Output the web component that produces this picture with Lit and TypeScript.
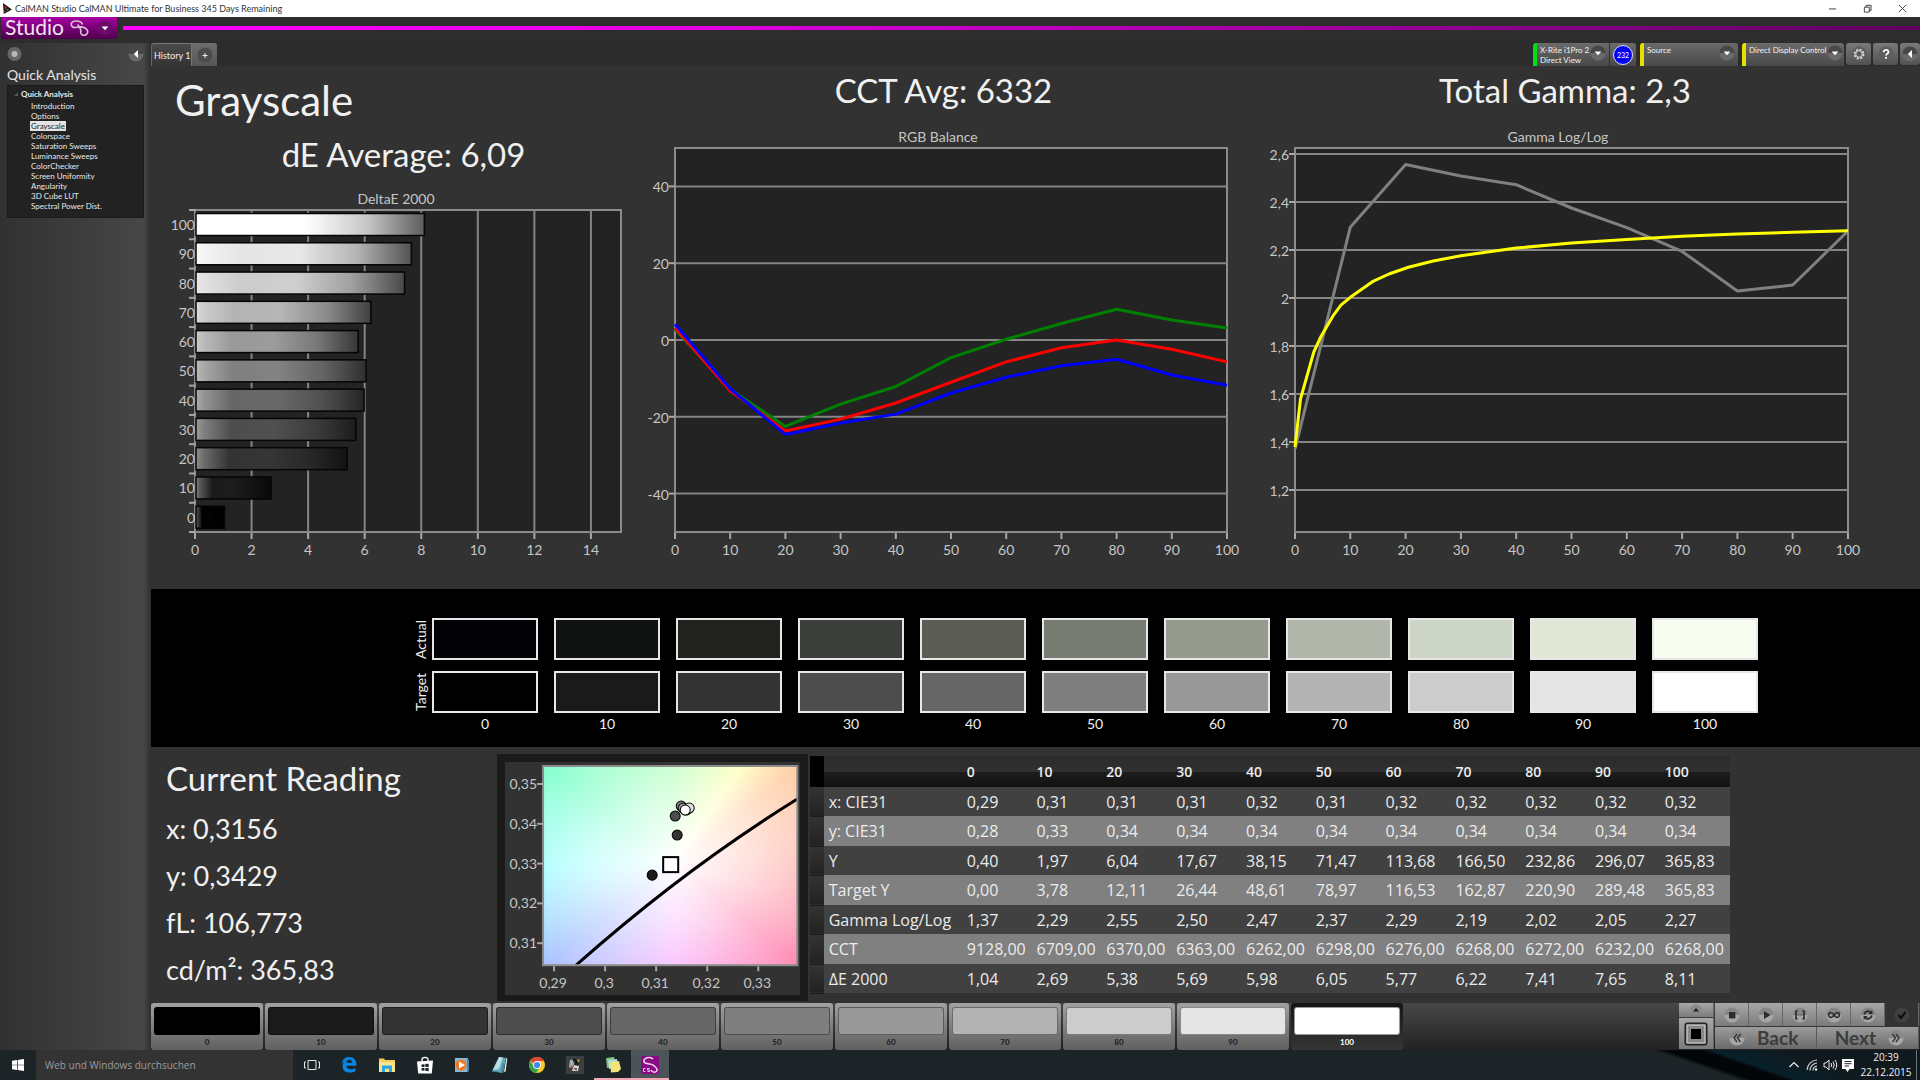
import { LitElement, html, svg, css, type TemplateResult } from "lit";
import { customElement, property } from "lit/decorators.js";
import { classMap } from "lit/directives/class-map.js";

type Point = [number, number];

const LEVELS = [0, 10, 20, 30, 40, 50, 60, 70, 80, 90, 100];
const ACTUAL = ["#020206", "#101311", "#22221f", "#3b3e3a", "#5b5d55", "#767c72", "#949b8d", "#b0b7aa", "#cdd5c6", "#e2e8d8", "#f6fdf0"];
const grey = (level: number, factor = 1, add = 0): string => {
  const v = Math.round(Math.min(255, level * 2.55 * factor + add));
  return `rgb(${v},${v},${v})`;
};
const comma = (v: number): string => String(v).replace(".", ",");

const DELTA_E = [1.04, 2.69, 5.38, 5.69, 5.98, 6.05, 5.77, 6.22, 7.41, 7.65, 8.11];

const RGB_SERIES: { color: string; values: number[] }[] = [
  { color: "#008000", values: [2.8, -12.8, -22.5, -16.7, -12.1, -4.6, 0.2, 4.3, 8, 5.2, 3.1] },
  { color: "#ff0000", values: [3.2, -13.2, -23.7, -20.6, -16.4, -11, -5.7, -2, 0, -2.4, -5.7] },
  { color: "#0000ff", values: [4.1, -12.7, -24.6, -21.6, -19.3, -13.8, -9.7, -6.7, -5, -9.1, -11.8] },
];
const GAMMA_MEASURED = [1.37, 2.295, 2.556, 2.508, 2.472, 2.375, 2.293, 2.194, 2.029, 2.054, 2.279];
const GAMMA_TARGET: Point[] = [
  [0, 1.379], [1, 1.58], [3.4, 1.775], [4.7, 1.84], [7, 1.93], [8.3, 1.97], [10, 2.003], [14, 2.068], [17, 2.1],
  [20.5, 2.128], [25, 2.154], [30, 2.176], [40, 2.208], [50, 2.229], [60, 2.244], [70, 2.257], [80, 2.267], [90, 2.274], [100, 2.28],
];

const TABLE: { label: string; values: string[] }[] = [
  { label: "x: CIE31", values: ["0,29", "0,31", "0,31", "0,31", "0,32", "0,31", "0,32", "0,32", "0,32", "0,32", "0,32"] },
  { label: "y: CIE31", values: ["0,28", "0,33", "0,34", "0,34", "0,34", "0,34", "0,34", "0,34", "0,34", "0,34", "0,34"] },
  { label: "Y", values: ["0,40", "1,97", "6,04", "17,67", "38,15", "71,47", "113,68", "166,50", "232,86", "296,07", "365,83"] },
  { label: "Target Y", values: ["0,00", "3,78", "12,11", "26,44", "48,61", "78,97", "116,53", "162,87", "220,90", "289,48", "365,83"] },
  { label: "Gamma Log/Log", values: ["1,37", "2,29", "2,55", "2,50", "2,47", "2,37", "2,29", "2,19", "2,02", "2,05", "2,27"] },
  { label: "CCT", values: ["9128,00", "6709,00", "6370,00", "6363,00", "6262,00", "6298,00", "6276,00", "6268,00", "6272,00", "6232,00", "6268,00"] },
  { label: "ΔE 2000", values: ["1,04", "2,69", "5,38", "5,69", "5,98", "6,05", "5,77", "6,22", "7,41", "7,65", "8,11"] },
];

const base = css`
  * { box-sizing: border-box; }
  button { font: inherit; color: inherit; border: 0; padding: 0; margin: 0; background: none; cursor: pointer; }
  a { color: inherit; text-decoration: none; }
  h1, h2, p { margin: 0; font-weight: 400; }
  svg { display: block; }
`;

const chartStyles = css`
  :host { display: block; }
  svg { width: 100%; height: auto; }
  .plot { fill: #232323; stroke: #8c8c8c; stroke-width: 2; }
  .grid { stroke: #858585; stroke-width: 2; }
  .tick { stroke: #a8a8a8; stroke-width: 2; }
  .label { fill: #c6c6c6; font-size: 14px; font-family: Lato, "Noto Sans", sans-serif; }
  .end { text-anchor: end; }
  .mid { text-anchor: middle; }
  .line { fill: none; stroke-width: 3; stroke-linejoin: round; }
`;

@customElement("delta-chart")
class DeltaChart extends LitElement {
  static styles = [base, chartStyles];
  render() {
    const row = 322 / 11;
    const x = (v: number) => 44 + v * 28.28;
    return html`<svg viewBox="0 0 480 403" role="img" aria-label="DeltaE 2000">
      <defs>
        ${LEVELS.map((l) => svg`<linearGradient id=${"bar" + l}>
          <stop offset="0" stop-color=${grey(l, 0.6, 110)}></stop>
          <stop offset=".05" stop-color=${grey(l, 0.75, 70)}></stop>
          <stop offset=".22" stop-color=${grey(l)}></stop>
          <stop offset=".48" stop-color=${grey(l, 1, 3)}></stop>
          <stop offset=".75" stop-color=${grey(l, 0.78)}></stop>
          <stop offset="1" stop-color=${grey(l, 0.36)}></stop>
        </linearGradient>`)}
      </defs>
      <text class="label mid" x="245" y="18">DeltaE 2000</text>
      <rect class="plot" x="44" y="24" width="426" height="322"></rect>
      ${[0, 2, 4, 6, 8, 10, 12, 14].map((v) => svg`
        ${v ? svg`<line class="grid" x1=${x(v)} x2=${x(v)} y1="24" y2="346"></line>` : ""}
        <line class="tick" x1=${x(v)} x2=${x(v)} y1="347" y2="353"></line>
        <text class="label mid" x=${x(v)} y="369">${v}</text>`)}
      ${LEVELS.map((_, i) => svg`<line class="tick" x1="38" x2="44" y1=${24 + i * row} y2=${24 + i * row}></line>`)}
      <line class="tick" x1="38" x2="44" y1="346" y2="346"></line>
      ${LEVELS.map((l, i) => {
        const top = 24 + (10 - i) * row;
        return svg`<rect x="45" y=${top + 3.5} width=${x(DELTA_E[i]) - 45} height="22" fill=${`url(#bar${l})`} stroke="#050505" stroke-width="1.5"></rect>
          <text class="label end" x="44" y=${top + 20}>${l}</text>`;
      })}
    </svg>`;
  }
}

@customElement("line-chart")
class LineChart extends LitElement {
  static styles = [base, chartStyles];
  @property() caption = "";
  @property({ type: Number }) width = 625;
  @property({ type: Number }) left = 44;
  @property({ type: Number }) right = 596;
  @property({ type: Number }) captionX = 307;
  @property({ type: Number }) min = 0;
  @property({ type: Number }) max = 1;
  @property({ attribute: false }) ticks: number[] = [];
  @property({ attribute: false }) series: { color: string; points: Point[] }[] = [];
  render() {
    const x = (v: number) => this.left + (v / 100) * (this.right - this.left);
    const y = (v: number) => 22 + ((this.max - v) / (this.max - this.min)) * 384;
    return html`<svg viewBox=${`0 0 ${this.width} 463`} role="img" aria-label=${this.caption}>
      <text class="label mid" x=${this.captionX} y="16">${this.caption}</text>
      <rect class="plot" x=${this.left} y="22" width=${this.right - this.left} height="384"></rect>
      ${this.ticks.map((t) => svg`
        <line class="grid" x1=${this.left} x2=${this.right} y1=${y(t)} y2=${y(t)}></line>
        <line class="tick" x1=${this.left - 6} x2=${this.left} y1=${y(t)} y2=${y(t)}></line>
        <text class="label end" x=${this.left - 6} y=${y(t) + 6}>${comma(t)}</text>`)}
      ${LEVELS.map((l) => svg`
        <line class="tick" x1=${x(l)} x2=${x(l)} y1="407" y2="413"></line>
        <text class="label mid" x=${x(l)} y="429">${l}</text>`)}
      ${this.series.map((s) => svg`<polyline class="line" stroke=${s.color} points=${s.points.map((p) => `${x(p[0])},${y(p[1])}`).join(" ")}></polyline>`)}
    </svg>`;
  }
}

@customElement("cie-chart")
class CieChart extends LitElement {
  static styles = [
    base,
    chartStyles,
    css`
      .gamut {
        width: 100%;
        height: 100%;
        background:
          radial-gradient(ellipse 100% 100% at 52% 48%, #fff 0, rgba(255, 255, 255, 0.62) 30%, rgba(255, 255, 255, 0) 72%),
          conic-gradient(from 0deg at 52% 48%, #b4ffb8 0deg, #ffffb4 35deg, #ffcba0 52deg, #ffb0a8 90deg, #ff88b2 129deg,
            #fab0ff 180deg, #aac4ff 232deg, #98ffff 268deg, #80ffcc 306deg, #b4ffb8 360deg);
      }
      .frame { fill: none; stroke: #8c8c8c; stroke-width: 2; }
      .locus { fill: none; stroke: #000; stroke-width: 3; }
      .dot { stroke: #000; stroke-width: 1; }
      .target { fill: #fff; stroke: #000; stroke-width: 2; }
    `,
  ];
  render() {
    const dots: [number, number, string][] = [
      [147, 113, "#1a1a1a"], [172, 73, "#333"], [170, 54, "#4d4d4d"], [176, 44, "#808080"], [178, 46, "#999"],
      [181, 48, "#b3b3b3"], [184, 46, "#e0e0e0"], [180, 48, "#fff"],
    ];
    return html`<svg viewBox="0 0 294 233" role="img" aria-label="CIE chromaticity">
      <foreignObject x="38" y="4" width="254" height="199"><div class="gamut"></div></foreignObject>
      <path class="locus" d="M71 203 Q179 107 292 37"></path>
      <rect class="frame" x="38" y="4" width="254" height="199"></rect>
      ${["0,35", "0,34", "0,33", "0,32", "0,31"].map((t, i) => svg`
        <line class="tick" x1="32" x2="38" y1=${22 + i * 39.75} y2=${22 + i * 39.75}></line>
        <text class="label end" x="32" y=${27 + i * 39.75}>${t}</text>`)}
      ${["0,29", "0,3", "0,31", "0,32", "0,33"].map((t, i) => svg`
        <line class="tick" x1=${49 + i * 51} x2=${49 + i * 51} y1="204" y2="209"></line>
        <text class="label mid" x=${48 + i * 51} y="226">${t}</text>`)}
      ${dots.map(([cx, cy, fill]) => svg`<circle class="dot" cx=${cx} cy=${cy} r="5" fill=${fill}></circle>`)}
      <rect class="target" x="158" y="95" width="15" height="15"></rect>
    </svg>`;
  }
}

const arrow = (dir: "down" | "left"): TemplateResult => html`<svg class="knob" viewBox="0 0 16 16" width="16" height="16" aria-hidden="true">
  <circle cx="8" cy="8" r="7.500" fill="#6a6a6a"></circle>
  <path d="M.5 8a7.500 7.500 0 0 1 15 0z" fill="#474747"></path>
  ${dir === "down" ? svg`<path d="M4.600 6.600h6.800L8 10.200z" fill="#fff"></path>` : svg`<path d="M10 4v8L5.800 8z" fill="#fff"></path>`}
</svg>`;

const CONTROL_ICONS: { name: string; icon: TemplateResult }[] = [
  { name: "Stop", icon: svg`<path d="M5 5h6.400v6.400H5z" fill="#2c2c2c"></path>` },
  { name: "Read", icon: svg`<path d="M6 4l6.500 4L6 12z" fill="#2c2c2c"></path>` },
  { name: "Read range", icon: svg`<path d="M4 3.500v9M12 3.500v9" stroke="#2c2c2c" stroke-width="1.700" fill="none"></path><path d="M4 4h1.800M4 12h1.800M12 4h-1.800M12 12h-1.800M6 8h1M7.700 8h1M9.400 8h1" stroke="#2c2c2c" stroke-width="1.200" fill="none"></path>` },
  { name: "Continuous", icon: svg`<path d="M8 8C6.800 6.200 6 5.600 5 5.600a2.400 2.400 0 0 0 0 4.800C6 10.400 6.800 9.800 8 8s2-2.400 3-2.400a2.400 2.400 0 0 1 0 4.800C10 10.400 9.200 9.800 8 8z" stroke="#2c2c2c" stroke-width="1.500" fill="none"></path>` },
  { name: "Refresh", icon: svg`<path d="M4.200 7.500a4 4 0 0 1 6.800-2M11.800 8.500a4 4 0 0 1-6.800 2" stroke="#2c2c2c" stroke-width="1.800" fill="none"></path><path d="M12.400 3v4H8.400zM3.600 13V9h4z" fill="#2c2c2c"></path>` },
];

const TASKS: { name: string; state?: string; icon: TemplateResult }[] = [
  { name: "Task View", icon: svg`<path d="M5 4.500h8v9H5zM3 6H1.500v6H3M15 6h1.500v6H15" stroke="#e8e8e8" fill="none"></path>` },
  { name: "Edge", icon: svg`<path d="M1.500 8.200C2 3.600 5.200 1 9.300 1c4.300 0 7 2.900 7 7v1.700H6.300c.2 2.400 2.200 3.500 4.600 3.500 1.700 0 3.200-.5 4.500-1.300v3.400c-1.500.9-3.300 1.300-5.300 1.300-4.700 0-7.600-2.500-7.600-6.700 0-2.400 1.300-4.500 3.500-5.700C4.300 4.900 2.700 6 1.500 8.200zm4.900-1.500h5.700c0-1.900-1-2.900-2.700-2.900-1.600 0-2.700 1.100-3 2.900z" fill="#0a84e0"></path>` },
  { name: "Explorer", icon: svg`<path d="M1 2.500h5l1 1.500h10v12H1z" fill="#f5cf58"></path><path d="M1 6h16v10H1z" fill="#fbe38d"></path><path d="M4 9.500h10V16h-3v-3.200H7V16H4z" fill="#2aa7e8"></path>` },
  { name: "Store", icon: svg`<path d="M1 5.500l16-1-1.200 13H2.200z" fill="#fff"></path><path d="M6 5.500V3.500C6 1 12 .5 12 3.500v1.500" fill="none" stroke="#fff" stroke-width="1.300"></path><path d="M5.500 8.500l3-.3v2.900h-3zM9.300 8.100l3.400-.4v3.400H9.300zM5.500 11.900h3v2.800l-3-.3zM9.300 11.900h3.400v3.300l-3.400-.4z" fill="#1d2529"></path>` },
  { name: "Media Player", icon: svg`<path d="M2 2h13v14H2z" fill="#88b8d4"></path><path d="M14 3l2 1v11l-2 1z" fill="#4f86a8"></path><circle cx="8" cy="9" r="5.500" fill="#f07a22"></circle><path d="M6 5.500l6 3.500-6 3.500z" fill="#fff"></path>` },
  { name: "Notepad", icon: svg`<path d="M8 1l7 1-3 15-11-2z" fill="#5fa9bb"></path><path d="M8 1l4 .5L8 13l-6 1z" fill="#b9dde4"></path><path d="M1 14.500l9 1.500 2-9 1.500 1L12 17 1 15.500z" fill="#3f8798"></path><path d="M13 15.500l2.500-14 .8 1.500L14.500 16z" fill="#e7f1f3"></path>` },
  { name: "Chrome", icon: svg`<circle cx="9" cy="9" r="8" fill="#f7c92e"></circle><path d="M9 1a8 8 0 0 1 6.900 4H9a4 4 0 0 0-3.700 2.500L2.300 4.600A8 8 0 0 1 9 1z" fill="#e04335"></path><path d="M2.100 5a8 8 0 0 0 6 12l3-5.300A4 4 0 0 1 5.400 10z" fill="#2fa04f"></path><circle cx="9" cy="9" r="3.900" fill="#fff"></circle><circle cx="9" cy="9" r="3.100" fill="#4486f0"></circle>` },
  { name: "Color Tool", icon: svg`<path d="M0 0h18v18H0z" fill="#3c3f40"></path><path d="M4 4l3-1 1 5-2 4-3-1z" fill="#9fb4b8"></path><path d="M9 3l5 1-2 5-3 1z" fill="#15191a"></path><path d="M8 9l5 1-1 5H6z" fill="#d8d2c4"></path><path d="M4 9l3 1-1 3z" fill="#b3543a"></path><path d="M11 3l3 1-2 3z" fill="#d8a23c"></path><path d="M6 3l3 0-1 3z" fill="#0f1112"></path><path d="M7 12l4 .5-.5 2z" fill="#333"></path>` },
  { name: "Sticky Notes", state: "open", icon: svg`<path d="M2 2l8-1 2 9-9 2z" fill="#7fc47a"></path><path d="M4 4l9-1 1 9-9 1z" fill="#a9d8e8"></path><path d="M6 6l9-1 2 8-3 3-7 .5z" fill="#f4e27a"></path>` },
  { name: "CalMAN Studio", state: "open active", icon: svg`<rect x="0" y="0" width="18" height="18" rx="1.500" fill="#8a0a86"></rect><path d="M12 3C9 0 2 2 3 5.500S10 7 12 9s5 3 4 5.500-5 2-6-.5" stroke="#f0d8f0" stroke-width="1.500" fill="none"></path><path d="M4.500 12.500h-2v3h2M8.500 12.500h-2v1.500h2v1.500h-2" stroke="#f0d8f0" stroke-width=".9" fill="none"></path>` },
];

@customElement("app-root")
class AppRoot extends LitElement {
  static styles = [
    base,
    css`
      :host {
        display: flex;
        flex-direction: column;
        min-height: 100vh;
        background: #2e2e2e;
        color: #f0f0f0;
        font-family: Lato, "Noto Sans", sans-serif;
        font-size: 14px;
      }
      .row { display: flex; align-items: center; }
      .titlebar { display: flex; align-items: center; height: 17px; background: #fff; color: #333; padding-left: 2px; gap: 3px; font-size: 9px; line-height: 17px; }
      .titlebar-text { flex: 1; }
      .win { width: 35px; height: 17px; display: grid; place-items: center; }

      .brandbar { display: flex; align-items: flex-start; height: 26px; gap: 6px; padding-left: 1px; background: #2d2d2d; }
      .brand { display: flex; align-items: center; gap: 4px; width: 116px; height: 22px; padding: 0 4px; border-radius: 0 0 3px 3px; background: linear-gradient(#a800a4, #4c004a); color: #f0e4f0; }
      .brand-name { font-size: 21px; line-height: 20px; flex: 1; text-align: left; padding-bottom: 2px; }
      .brand .drop { margin-left: 4px; }
      .brandline { flex: 1; height: 4px; margin-top: 9px; background: linear-gradient(90deg, #f0f 0, #e600e6 30%, #8a008a 78%, #600060); }

      .work { display: flex; flex: 1; }
      .sidebar { width: 151px; flex: none; background: linear-gradient(90deg, #313131, #474747 95%, #2e2e2e); padding: 3px 7px 0 7px; }
      .sidebar-top { display: flex; justify-content: space-between; }
      .sidebar h2 { font-size: 14px; line-height: 16px; padding: 5px 0 2px; color: #e4e4e4; }
      .knob { flex: none; }
      .tree { background: #222; border: 1px solid #1a1a1a; padding: 3px 0 6px 14px; font-size: 8px; line-height: 10px; min-height: 133px; color: #e8e8e8; }
      .tree ul { list-style: none; margin: 0; padding: 2px 0 0 9px; }
      .tree li { height: 10px; }
      .tree-root { display: flex; gap: 3px; margin-left: -8px; font-weight: 700; align-items: center; }
      .current { background: #e4e4e4; color: #222; padding: 0 1px; margin-left: -1px; }

      .main { flex: 1; min-width: 0; display: flex; flex-direction: column; }
      .tabs { display: flex; justify-content: space-between; height: 23px; background: #2c2c2c; }
      .tabset { display: flex; }
      .tab { height: 23px; padding: 0 2px; width: 40px; background: linear-gradient(#4a4a4a, #343434); border-top: 1px solid #777; border-left: 1px solid #666; border-radius: 3px 0 0 0; font-size: 9px; white-space: nowrap; }
      .tab-add { width: 26px; background: linear-gradient(#6e6e6e, #565656); border-radius: 0 3px 0 0; display: grid; place-items: center; border-left: 1px solid #777; }
      .devices { display: flex; align-items: flex-start; gap: 4px; }
      .tools { display: flex; gap: 2px; margin-left: -2px; }
      .device { display: flex; height: 23px; background: linear-gradient(#6b6b6b, #484848); border-radius: 3px 3px 0 0; border-left: 4px solid #e6e000; font-size: 8px; line-height: 10px; overflow: hidden; }
      .device-main { display: flex; text-align: left; padding: 2px 3px 0; color: #f2f2f2; white-space: nowrap; justify-content: space-between; flex: 1; }
      .meter { border-left-color: #00dd10; width: 103px; }
      .source { width: 98px; }
      .display { width: 102px; }
      .count { width: 27px; border-left: 1px solid #333; display: grid; place-items: center; }
      .badge { width: 20px; height: 20px; border-radius: 50%; background: #0000f4; border: 1px solid #dfe0ff; color: #fff; font-size: 7px; line-height: 18px; text-align: center; }
      .tool { width: 25px; height: 22px; border-radius: 3px; background: linear-gradient(#7a7a7a, #515151); display: grid; place-items: center; }
      .tool-last { width: 20px; }

      .charts { display: grid; grid-template-columns: minmax(0, 480fr) minmax(0, 625fr) minmax(0, 618fr); padding-right: 46px; background: #323232; align-items: end; }
      .big { font-size: 42px; line-height: 56px; padding-left: 24px; padding-top: 6px; height: 60px; }
      .mean { font-size: 33px; line-height: 48px; height: 60px; text-align: center; }
      .mean-first { padding: 4px 0 0 25px; }

      .band { background: #000; padding: 29px 162px 14px 259px; display: grid; grid-template-columns: 22px minmax(0, 1fr); row-gap: 11px; align-items: center; }
      .side { writing-mode: vertical-rl; transform: rotate(180deg); font-size: 14px; line-height: 22px; text-align: center; height: 42px; }
      .swatches { display: grid; grid-template-columns: repeat(11, minmax(0, 1fr)); column-gap: 16px; }
      .swatch { height: 42px; border: 2px solid #e6e6e6; }
      .legend { grid-column: 2; margin-top: -9px; text-align: center; line-height: 18px; }

      .bottom { display: grid; grid-template-columns: minmax(0, 346fr) minmax(0, 310fr) minmax(0, 921fr) minmax(0, 190fr); align-items: start; background: #323232; padding-top: 7px; flex: 1; }
      .reading { padding-left: 15px; font-size: 27px; line-height: 47px; }
      .reading h2 { font-size: 33px; line-height: 48px; padding-bottom: 3px; }
      .cie { background: #1a1a1a; padding: 8px 8px 6px; }
      .cie-inner { background: #323232; }
      .values { width: calc(100% - 2px); margin: 2px 0 0 2px; border-collapse: collapse; table-layout: fixed; font-family: "Open Sans", "Noto Sans", sans-serif; font-size: 16px; color: #ececec; }
      .values th, .values td { padding: 0 0 0 5px; text-align: left; font-weight: 400; white-space: nowrap; line-height: 26px; }
      .values thead tr { height: 31px; background: linear-gradient(#2b2b2b, #303030 50%, #1c1c1c 51%, #131313); }
      .values thead th { font-size: 14px; font-weight: 600; }
      .values thead .grip { background: #000; }
      .values tbody tr { height: 29px; background: #414141; }
      .values tbody tr:nth-child(even) { height: 30px; background: #808080; }
      .values tbody .grip { background: linear-gradient(#333, #222); border-bottom: 1px solid #1c1c1c; }
      .col-grip { width: 14px; }
      .col-name { width: 138px; }

      .strip { display: flex; height: 47px; background: linear-gradient(#484848, #222); }
      .patches { display: grid; grid-template-columns: repeat(11, 112px); gap: 2px; flex: 1; }
      .patch { display: flex; flex-direction: column; height: 47px; border-radius: 3px; background: linear-gradient(#a2a2a2, #7c7c7c 55%, #606060); padding: 4px 3px 0; font-size: 8px; line-height: 15px; font-weight: 700; color: #1c1c1c; text-align: center; }
      .patch-color { display: block; width: 100%; height: 28px; border-radius: 3px; border: 1px solid rgba(0, 0, 0, 0.4); }
      .patch.selected { background: linear-gradient(#151515, #363636); color: #fff; }
      .transport { display: grid; grid-template-columns: 36px repeat(6, 34px); grid-template-rows: 23px 22px; row-gap: 1px; padding-right: 1px; }
      .target { grid-row: 1 / 3; display: grid; grid-template-rows: 14px 31px; row-gap: 1px; margin-right: 1px; }
      .key { display: grid; place-items: center; background: linear-gradient(#a8a8a8, #7b7b7b); border-right: 1px solid #666; color: #2c2c2c; }
      .key-off { background: #333; }
      .nav { display: flex; align-items: center; gap: 12px; grid-column: span 3; padding: 0 14px; font-size: 19px; line-height: 20px; font-weight: 700; color: #3c3c3c; background: linear-gradient(#9c9c9c, #6a6a6a); border-right: 1px solid #5a5a5a; }
      .nav-next { justify-content: flex-end; }

      .taskbar { display: flex; height: 30px; background: linear-gradient(19deg, #1c2428 0 31%, #020608 34% 43%, #07202b 46%, #10191d 66%) right / 300px 100% no-repeat, #1c2428; }
      .start { width: 36px; display: grid; place-items: center; }
      .search { width: 257px; border: 0; background: #333; color: #9c9c9c; font: 10px "Open Sans", sans-serif; padding: 0 9px; outline: 0; }
      .search::placeholder { color: #9c9c9c; opacity: 1; }
      .apps { display: grid; grid-template-columns: repeat(10, minmax(0, 1fr)); width: 376px; margin-right: auto; }
      .task { display: grid; place-items: center; height: 30px; }
      .open { border-bottom: 2px solid #f0a8b4; padding-top: 2px; }
      .active { background: #4a5459; }
      .tray { display: flex; align-items: center; gap: 2px; padding-right: 3px; }
      .clock { font: 10px/15px "Open Sans", sans-serif; text-align: center; width: 56px; color: #f0f0f0; }
      .peek { width: 1px; height: 30px; background: #6b7478; }
    `,
  ];

  private renderSidebar() {
    const items = ["Introduction", "Options", "Grayscale", "Colorspace", "Saturation Sweeps", "Luminance Sweeps", "ColorChecker", "Screen Uniformity", "Angularity", "3D Cube LUT", "Spectral Power Dist."];
    return html`<aside class="sidebar">
      <div class="sidebar-top">
        <button aria-label="Record">
          <svg viewBox="0 0 16 16" width="16" height="16"><circle cx="7.500" cy="8" r="7" fill="#666"></circle><circle cx="7.500" cy="8" r="3" fill="#b8b8b8"></circle></svg>
        </button>
        <button aria-label="Collapse">${arrow("left")}</button>
      </div>
      <h2>Quick Analysis</h2>
      <nav class="tree">
        <div class="tree-root">
          <svg viewBox="0 0 4 4" width="4" height="4"><path d="M4 0v4H0z" fill="#555"></path></svg>
          <a href="#quick">Quick Analysis</a>
        </div>
        <ul>${items.map((t) => html`<li><a href="#" class=${classMap({ current: t === "Grayscale" })}>${t}</a></li>`)}</ul>
      </nav>
    </aside>`;
  }

  private renderTabs() {
    return html`<div class="tabs">
      <div class="tabset">
        <button class="tab">History 1</button>
        <button class="tab-add" aria-label="New history">
          <svg viewBox="0 0 16 16" width="16" height="16"><circle cx="8" cy="8" r="7.500" fill="#4c4c4c"></circle><path d="M8 6v5M5.500 8.500h5" stroke="#eee"></path></svg>
        </button>
      </div>
      <div class="devices">
        <div class="device meter">
          <button class="device-main"><span>X-Rite i1Pro 2<br />Direct View</span>${arrow("down")}</button>
          <div class="count"><span class="badge">232</span></div>
        </div>
        <div class="device source"><button class="device-main"><span>Source</span>${arrow("down")}</button></div>
        <div class="device display"><button class="device-main"><span>Direct Display Control</span>${arrow("down")}</button></div>
        <div class="tools">
          <button class="tool" aria-label="Settings">
            <svg viewBox="0 0 16 16" width="16" height="16"><circle cx="8" cy="8" r="7.500" fill="#5c5c5c"></circle><circle cx="8" cy="8" r="4.600" fill="none" stroke="#e0e0e0" stroke-width="1.600" stroke-dasharray="2.200 1.400"></circle><circle cx="8" cy="8" r="3.300" fill="none" stroke="#e0e0e0"></circle></svg>
          </button>
          <button class="tool" aria-label="Help">
            <svg viewBox="0 0 16 16" width="16" height="16"><circle cx="8" cy="8" r="7.500" fill="#5c5c5c"></circle><path d="M5.600 6.200c0-3.200 4.900-3 4.900-.2C10.500 7.800 8 7.800 8 9.600" fill="none" stroke="#fff" stroke-width="1.800"></path><circle cx="8" cy="11.800" r="1.100" fill="#fff"></circle></svg>
          </button>
          <button class="tool tool-last" aria-label="Collapse panel">${arrow("left")}</button>
        </div>
      </div>
    </div>`;
  }

  private renderCharts() {
    const toPoints = (values: number[]): Point[] => values.map((v, i) => [i * 10, v]);
    const rgb = RGB_SERIES.map((s) => ({ color: s.color, points: toPoints(s.values) }));
    const gamma = [
      { color: "#808080", points: toPoints(GAMMA_MEASURED) },
      { color: "#ffff00", points: GAMMA_TARGET },
    ];
    return html`<section class="charts">
      <div>
        <h1 class="big">Grayscale</h1>
        <p class="mean mean-first">dE Average: 6,09</p>
        <delta-chart></delta-chart>
      </div>
      <div>
        <p class="mean">CCT Avg: 6332</p>
        <line-chart caption="RGB Balance" .min=${-50} .max=${50} .ticks=${[40, 20, 0, -20, -40]} .series=${rgb}></line-chart>
      </div>
      <div>
        <p class="mean">Total Gamma: 2,3</p>
        <line-chart caption="Gamma Log/Log" .width=${618} .left=${39} .right=${592} .captionX=${302} .min=${1.025} .max=${2.625}
          .ticks=${[2.6, 2.4, 2.2, 2, 1.8, 1.6, 1.4, 1.2]} .series=${gamma}></line-chart>
      </div>
    </section>`;
  }

  private renderBand() {
    return html`<section class="band">
      <span class="side">Actual</span>
      <div class="swatches">${ACTUAL.map((c) => html`<div class="swatch" style="background:${c}"></div>`)}</div>
      <span class="side">Target</span>
      <div class="swatches">${LEVELS.map((l) => html`<div class="swatch" style="background:${grey(l)}"></div>`)}</div>
      <div class="swatches legend">${LEVELS.map((l) => html`<span>${l}</span>`)}</div>
    </section>`;
  }

  private renderBottom() {
    return html`<section class="bottom">
      <div class="reading">
        <h2>Current Reading</h2>
        <p>x: 0,3156</p>
        <p>y: 0,3429</p>
        <p>fL: 106,773</p>
        <p>cd/m²: 365,83</p>
      </div>
      <div class="cie"><div class="cie-inner"><cie-chart></cie-chart></div></div>
      <table class="values">
        <colgroup><col class="col-grip" /><col class="col-name" />${LEVELS.map(() => html`<col />`)}</colgroup>
        <thead><tr><td class="grip"></td><td></td>${LEVELS.map((l) => html`<th scope="col">${l}</th>`)}</tr></thead>
        <tbody>${TABLE.map((r) => html`<tr><td class="grip"></td><th scope="row">${r.label}</th>${r.values.map((v) => html`<td>${v}</td>`)}</tr>`)}</tbody>
      </table>
    </section>`;
  }

  private renderStrip() {
    const disc = svg`<circle cx="8" cy="8" r="7.500" fill="#a6a6a6"></circle><path d="M.5 8a7.500 7.500 0 0 1 15 0z" fill="#868686"></path>`;
    return html`<div class="strip">
      <div class="patches">
        ${LEVELS.map((l) => html`<button class=${classMap({ patch: true, selected: l === 100 })}>
          <span class="patch-color" style="background:${grey(l)}"></span>${l}
        </button>`)}
      </div>
      <div class="transport">
        <div class="target">
          <button class="key" aria-label="Expand"><svg viewBox="0 0 12 12" width="12" height="12"><circle cx="6" cy="6" r="5.500" fill="#888"></circle><path d="M3 7.500h6L6 4z" fill="#222"></path></svg></button>
          <button class="key" aria-label="Pattern window">
            <svg viewBox="0 0 24 24" width="24" height="24"><rect x="1.500" y="1.500" width="21" height="21" rx="2" fill="#888" stroke="#222" stroke-width="2"></rect><rect x="3" y="3" width="18" height="18" fill="none" stroke="#ddd"></rect><path d="M7 7h10v10H7z" fill="#000"></path></svg>
          </button>
        </div>
        ${CONTROL_ICONS.map((c) => html`<button class="key" aria-label=${c.name}><svg viewBox="0 0 16 16" width="16" height="16">${disc}${c.icon}</svg></button>`)}
        <button class="key key-off" aria-label="Accept"><svg viewBox="0 0 16 16" width="16" height="16"><circle cx="8" cy="8" r="7.500" fill="#404040"></circle><path d="M4.500 8l2.500 3 4.500-6" stroke="#111" stroke-width="2.200" fill="none"></path></svg></button>
        <button class="nav"><svg viewBox="0 0 16 16" width="16" height="16">${disc}<path d="M8 4L5 8l3 4M11.500 4l-3 4 3 4" stroke="#333" stroke-width="1.300" fill="none"></path></svg>Back</button>
        <button class="nav nav-next">Next<svg viewBox="0 0 16 16" width="16" height="16">${disc}<path d="M4.500 4l3 4-3 4M8 4l3 4-3 4" stroke="#333" stroke-width="1.300" fill="none"></path></svg></button>
      </div>
    </div>`;
  }

  private renderTaskbar() {
    return html`<footer class="taskbar">
      <button class="start" aria-label="Start">
        <svg viewBox="0 0 12 12" width="12" height="12"><path d="M0 1.700L5 1v4.700H0zM5.700.9L12 0v5.700H5.700zM0 6.300h5V11l-5-.7zM5.700 6.300H12V12l-6.300-.9z" fill="#fff"></path></svg>
      </button>
      <input class="search" type="text" placeholder="Web und Windows durchsuchen" aria-label="Web und Windows durchsuchen" />
      <div class="apps">
        ${TASKS.map((t) => html`<button class=${"task " + (t.state ?? "")} aria-label=${t.name}><svg viewBox="0 0 18 18" width="18" height="18">${t.icon}</svg></button>`)}
      </div>
      <div class="tray">
        <svg viewBox="0 0 16 16" width="16" height="16"><path d="M3.500 10L8 5.500l4.500 4.500" stroke="#eee" stroke-width="1.200" fill="none"></path></svg>
        <svg viewBox="0 0 16 16" width="16" height="16"><path d="M3 13A10.500 10.500 0 0 1 13 3M6 13.500A7.500 7.500 0 0 1 13 6M9 13.500A4.500 4.500 0 0 1 13 9.200" stroke="#ccc" stroke-width="1.200" fill="none"></path><circle cx="12" cy="12.500" r="1.200" fill="#fff"></circle></svg>
        <svg viewBox="0 0 16 16" width="16" height="16"><path d="M2 6h2l3-3v10l-3-3H2z" stroke="#eee" fill="none"></path><path d="M9 6q1.500 2 0 4M11 4.500q2.500 3.500 0 7M13 3q3.500 5 0 10" stroke="#eee" fill="none"></path></svg>
        <svg viewBox="0 0 16 16" width="16" height="16"><path d="M2 2h12v10H9.500l-2 3-2-3H2z" fill="#fff"></path><path d="M4.500 4.500h7M4.500 6.700h7M4.500 9h4.500" stroke="#1d2529"></path></svg>
        <div class="clock">20:39<br />22.12.2015</div>
        <div class="peek"></div>
      </div>
    </footer>`;
  }

  render() {
    return html`
      <header>
        <div class="titlebar">
          <svg viewBox="0 0 11 12" width="10" height="11"><path d="M1 0l10 7-9 5z" fill="#1d1414"></path><path d="M2.500 3l3 2-2 2z" fill="#d22"></path><path d="M5 6l3 1-3 2z" fill="#2a8a3a"></path><path d="M2.500 8l2 1-1.500 1.500z" fill="#c33"></path></svg>
          <span class="titlebar-text">CalMAN Studio CalMAN Ultimate for Business 345 Days Remaining</span>
          <div class="row">
            <button class="win" aria-label="Minimize"><svg viewBox="0 0 10 10" width="9" height="9"><path d="M1 5.500h8" stroke="#333"></path></svg></button>
            <button class="win" aria-label="Restore"><svg viewBox="0 0 10 10" width="9" height="9"><path d="M1.500 3.500h5.500v5.500H1.500zM3.500 3.500V1.500H9V7H7" stroke="#333" fill="none"></path></svg></button>
            <button class="win" aria-label="Close"><svg viewBox="0 0 10 10" width="9" height="9"><path d="M1 1l8 8M9 1L1 9" stroke="#333"></path></svg></button>
          </div>
        </div>
        <div class="brandbar">
          <button class="brand">
            <span class="brand-name">Studio</span>
            <svg viewBox="0 0 19 17" width="19" height="17"><path d="M12.500 4.500C11.500 1.500 8.500 .8 5.500 1S.8 3 1.300 5s3 2.800 5.400 2.300 5-.8 7.300.2 4 3 3.600 5-2.600 3.200-4.600 2.700-2.700-2.200-2.200-3.900S9.500 7 7.500 4.500" fill="none" stroke="#d8c0d8" stroke-width="1.600"></path></svg>
            <svg class="drop" viewBox="0 0 16 16" width="16" height="16"><circle cx="8" cy="8" r="7.500" fill="#6c0a6a"></circle><path d="M4.600 6.600h6.800L8 10.200z" fill="#fff"></path></svg>
          </button>
          <div class="brandline"></div>
        </div>
      </header>
      <div class="work">
        ${this.renderSidebar()}
        <main class="main">
          ${this.renderTabs()} ${this.renderCharts()} ${this.renderBand()} ${this.renderBottom()} ${this.renderStrip()}
        </main>
      </div>
      ${this.renderTaskbar()}
    `;
  }
}
